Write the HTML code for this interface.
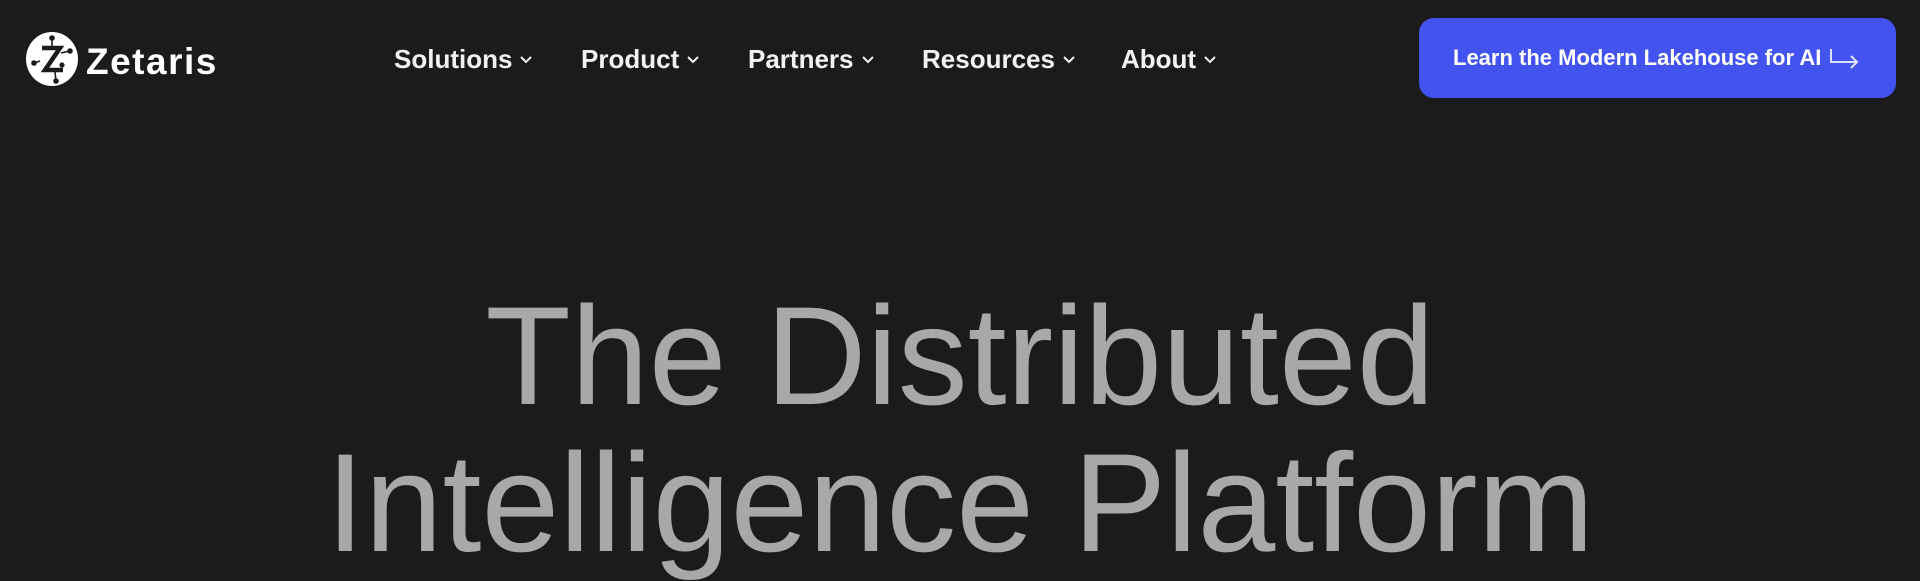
<!DOCTYPE html>
<html><head><meta charset="utf-8"><style>
*{margin:0;padding:0;box-sizing:border-box}
body{width:1920px;height:512px;background:#1b1b1b;overflow:hidden;font-family:"Liberation Sans",sans-serif;position:relative}
.logo{position:absolute;left:25px;top:31px;width:54px;height:56px}
.brand{position:absolute;left:86px;top:41px;color:#fff;font-weight:bold;font-size:37px;letter-spacing:1.5px}
.nav{position:absolute;top:44px;color:#f2f2f2;font-size:26px;font-weight:bold;white-space:nowrap}
.nav svg{margin-left:7px;vertical-align:4px}
.btn{position:absolute;left:1419px;top:18px;width:477px;height:80px;background:#4353f0;border-radius:15px;color:#fff;font-size:22px;font-weight:bold;line-height:80px;padding-left:34px;white-space:nowrap}
.btn svg{vertical-align:-4px;margin-left:8px}
h1{position:absolute;left:0;width:1920px;text-align:center;color:#a8a8a8;font-weight:normal;font-size:140px;line-height:147px;top:282px}
</style></head><body>
<svg class="logo" viewBox="0 0 54 56"><ellipse cx="27" cy="28" rx="26" ry="27" fill="#fff"/>
<path d="M17 17h18l-15 22h18" stroke="#1b1b1b" stroke-width="4.5" fill="none"/>
<g stroke="#1b1b1b" stroke-width="1.6" fill="#1b1b1b"><line x1="27" y1="7" x2="27" y2="15"/><circle cx="27" cy="7" r="2"/><line x1="36" y1="22" x2="45" y2="20"/><circle cx="45" cy="20" r="2"/><line x1="15" y1="30" x2="9" y2="32"/><circle cx="9" cy="32" r="2"/><line x1="30" y1="41" x2="31" y2="50"/><circle cx="31" cy="50" r="2"/><circle cx="37" cy="34" r="1.8"/></g></svg>
<div class="brand">Zetaris</div>
<div class="nav" style="left:394px">Solutions<svg width="14" height="9" viewBox="0 0 14 9"><path d="M2 2l5 5 5-5" stroke="#f2f2f2" stroke-width="2" fill="none"/></svg></div>
<div class="nav" style="left:581px">Product<svg width="14" height="9" viewBox="0 0 14 9"><path d="M2 2l5 5 5-5" stroke="#f2f2f2" stroke-width="2" fill="none"/></svg></div>
<div class="nav" style="left:748px">Partners<svg width="14" height="9" viewBox="0 0 14 9"><path d="M2 2l5 5 5-5" stroke="#f2f2f2" stroke-width="2" fill="none"/></svg></div>
<div class="nav" style="left:922px">Resources<svg width="14" height="9" viewBox="0 0 14 9"><path d="M2 2l5 5 5-5" stroke="#f2f2f2" stroke-width="2" fill="none"/></svg></div>
<div class="nav" style="left:1121px">About<svg width="14" height="9" viewBox="0 0 14 9"><path d="M2 2l5 5 5-5" stroke="#f2f2f2" stroke-width="2" fill="none"/></svg></div>
<div class="btn">Learn the Modern Lakehouse for AI<svg width="32" height="22" viewBox="0 0 32 22"><path d="M2 2v13h26M22 9l6 6-6 6" stroke="#dfe2ff" stroke-width="2" fill="none"/></svg></div>
<h1>The Distributed<br>Intelligence Platform</h1>
</body></html>
